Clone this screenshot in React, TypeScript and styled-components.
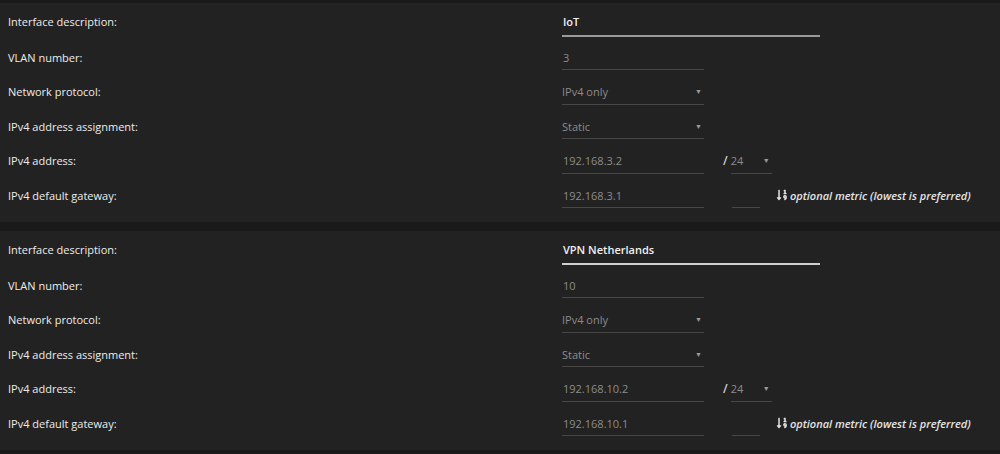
import React from 'react';
import styled, {createGlobalStyle} from 'styled-components';
import {FaSortNumericDown} from 'react-icons/fa';

const GlobalStyle = createGlobalStyle`
    html, body {
        margin: 0;
        padding: 0;
        background: #1a1a1a;
    }
    body {
        font-family: "Open Sans", "Liberation Sans", sans-serif;
        font-size: 11px;
        color: #e2e2e2;
    }
`;

type Iface = {
    description: string,
    vlan: string,
    address: string,
    gateway: string,
    accent: string,
};

const interfaces: Iface[] = [
    {description: 'IoT', vlan: '3', address: '192.168.3.2', gateway: '192.168.3.1', accent: '#9a9a9a'},
    {description: 'VPN Netherlands', vlan: '10', address: '192.168.10.2', gateway: '192.168.10.1', accent: '#d0d0d0'},
];

function Select({value, width}: {value: string, width: number}) {
    return (
        <SelectBox $width={width}>
            <span>{value}</span>
            <Caret>▼</Caret>
        </SelectBox>
    );
}

function Section({iface}: {iface: Iface}) {
    return (
        <Panel>
            <Row $height={37}>
                <Label>Interface description:</Label>
                <Control>
                    <DescInput $accent={iface.accent}>{iface.description}</DescInput>
                </Control>
            </Row>
            <Row>
                <Label>VLAN number:</Label>
                <Control>
                    <TextInput $width={142}>{iface.vlan}</TextInput>
                </Control>
            </Row>
            <Row>
                <Label>Network protocol:</Label>
                <Control>
                    <Select value='IPv4 only' width={142}/>
                </Control>
            </Row>
            <Row>
                <Label>IPv4 address assignment:</Label>
                <Control>
                    <Select value='Static' width={142}/>
                </Control>
            </Row>
            <Row>
                <Label>IPv4 address:</Label>
                <Control>
                    <TextInput $width={142}>{iface.address}</TextInput>
                    <Slash>/</Slash>
                    <Select value='24' width={41}/>
                </Control>
            </Row>
            <Row>
                <Label>IPv4 default gateway:</Label>
                <Control>
                    <TextInput $width={142}>{iface.gateway}</TextInput>
                    <Metric/>
                    <Hint>
                        <FaSortNumericDown size={12}/>
                        <em>optional metric (lowest is preferred)</em>
                    </Hint>
                </Control>
            </Row>
        </Panel>
    );
}

export default function App() {
    return (
        <>
            <GlobalStyle/>
            <Page>
                {interfaces.map((iface) => (
                    <Section
                        key={iface.description}
                        iface={iface}
                    />
                ))}
            </Page>
        </>
    );
}

const Page = styled.div`
    display: flex;
    flex-direction: column;
    gap: 9px;
    padding-top: 3px;
    width: 1000px;
    height: 454px;
    background: #1a1a1a;
`;

const Panel = styled.div`
    display: flex;
    flex-direction: column;
    height: 219px;
    background: #222222;
`;

const Row = styled.div<{ $height?: number }>`
    display: grid;
    grid-template-columns: 554px 1fr;
    align-items: center;
    height: ${({$height}) => $height ?? 34.5}px;
    padding-left: 8px;
`;

const Label = styled.div`
    color: #ececec;
    font-weight: 400;
`;

const Control = styled.div`
    display: flex;
    align-items: center;
`;

const DescInput = styled.div<{ $accent: string }>`
    box-sizing: border-box;
    display: flex;
    align-items: center;
    width: 258px;
    height: 29px;
    margin-top: 1px;
    padding-left: 1px;
    border-bottom: 2px solid ${({$accent}) => $accent};
    color: #f0f0f0;
    font-weight: 600;
`;

const TextInput = styled.div<{ $width: number }>`
    box-sizing: border-box;
    display: flex;
    align-items: center;
    width: ${({$width}) => $width}px;
    height: 25px;
    margin-top: 1px;
    padding-left: 1px;
    border-bottom: 1px solid #474747;
    color: #8c8c8c;
`;

const SelectBox = styled.div<{ $width: number }>`
    box-sizing: border-box;
    display: flex;
    align-items: center;
    justify-content: space-between;
    width: ${({$width}) => $width}px;
    height: 25px;
    margin-top: 1px;
    padding: 0 2px 0 0;
    border-bottom: 1px solid #474747;
    color: #8c8c8c;
`;

const Caret = styled.span`
    font-size: 7px;
    color: #9a9a9a;
`;

const Slash = styled.span`
    margin: 0 3px 0 19px;
    color: #cfcfcf;
    font-size: 12px;
    font-weight: 600;
`;

const Metric = styled.div`
    width: 28px;
    height: 25px;
    margin: 1px 0 0 28px;
    box-sizing: border-box;
    border-bottom: 1px solid #474747;
`;

const Hint = styled.div`
    display: flex;
    align-items: center;
    gap: 2px;
    margin-left: 16px;
    color: #e4e4e4;

    em {
        font-weight: 600;
    }
`;
